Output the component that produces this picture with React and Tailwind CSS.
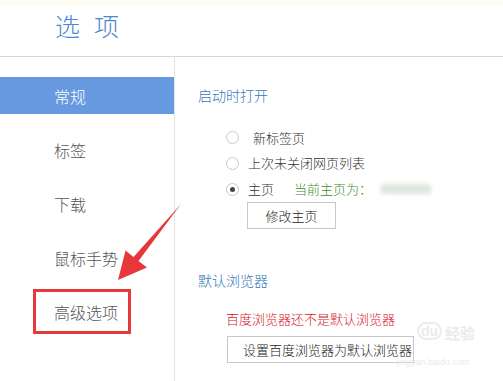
import React from 'react'

const cjk = { fontFamily: '"Microsoft YaHei", "Noto Sans CJK SC", sans-serif' }

const navItems = ['常规', '标签', '下载', '鼠标手势', '高级选项']

const Radio = ({ checked }) => (
  <span className="w-[13px] h-[13px] rounded-full border border-[#c9c9c9] bg-white flex items-center justify-center shrink-0">
    {checked && <span className="w-[5px] h-[5px] rounded-full bg-[#444]" />}
  </span>
)

const App = () => {
  return (
    <div className="relative w-[503px] h-[381px] bg-white overflow-hidden font-light" style={cjk}>
      {/* Header */}
      <div className="h-[6px] bg-[#fffdf2]" />
      <div className="h-[51px] border-b border-[#d6d6d6] flex items-center pl-[55px] pb-[10px] gap-[14px] text-[25px] text-[#4a88d2]">
        <span>选</span>
        <span>项</span>
      </div>

      <div className="flex h-[324px]">
        {/* Sidebar */}
        <div className="w-[175px] border-r border-[#e2e2e2] pt-[20px] flex flex-col gap-[17px]">
          {navItems.map((item, i) => (
            <div
              key={item}
              className={
                i === 0
                  ? 'h-[37px] w-[174px] bg-[#6699e0] text-white text-[16px] flex items-center pl-[54px]'
                  : 'h-[37px] text-[#555] text-[16px] flex items-center pl-[54px]'
              }
            >
              {item}
            </div>
          ))}
        </div>

        {/* Content */}
        <div className="flex-1 pl-[23px] pt-[28px]">
          <div className="text-[14px] leading-[20px] text-[#3577b8]">启动时打开</div>
          <div className="pl-[28px] pt-[20px] text-[13px] text-[#333]">
            <div className="h-[25px] flex items-center gap-[11px]">
              <Radio />
              <span className="pl-[3px]">新标签页</span>
            </div>
            <div className="h-[26px] flex items-center gap-[9px]">
              <Radio />
              <span>上次未关闭网页列表</span>
            </div>
            <div className="h-[26px] flex items-center gap-[9px]">
              <Radio checked />
              <span>主页</span>
              <span className="ml-[11px] text-[#3f8a1f]">当前主页为：</span>
              <span className="w-[50px] h-[10px] bg-[#dfe6df] blur-[2px]" />
            </div>
            <div className="pl-[21px]">
              <button className="w-[89px] h-[27px] border border-[#c8c8c8] bg-white text-[13px] text-[#222]">
                修改主页
              </button>
            </div>
          </div>

          <div className="mt-[41px] text-[14px] leading-[20px] text-[#3577b8]">默认浏览器</div>
          <div className="pl-[28px] pt-[19px]">
            <div className="text-[13px] leading-[20px] text-[#d7161c]">百度浏览器还不是默认浏览器</div>
            <button className="mt-[7px] ml-[1px] w-[187px] h-[27px] border border-[#c8c8c8] bg-white text-[13px] text-[#222] pl-[15px] text-left whitespace-nowrap overflow-hidden">
              设置百度浏览器为默认浏览器
            </button>
          </div>
        </div>
      </div>

      {/* Watermark */}
      <div className="absolute left-[417px] top-[322px] text-[#ebebeb] select-none pointer-events-none">
        <div className="flex items-end gap-[3px] leading-none">
          <span className="text-[14px] font-bold border-2 border-[#ebebeb] rounded-full px-[2px]" style={{ fontFamily: '"Liberation Sans", sans-serif' }}>du</span>
          <span className="text-[15px] font-bold">经验</span>
        </div>
        <div className="text-[9px] mt-[16px] -ml-[20px]" style={{ fontFamily: '"Liberation Sans", sans-serif' }}>jingyan.baidu.com</div>
      </div>

      {/* Annotation: red box */}
      <div className="absolute left-[33px] top-[289px] w-[98px] h-[45px] border-[3px] border-[#e6393b]" />

      {/* Annotation: arrow */}
      <svg className="absolute left-0 top-0" width="503" height="381" viewBox="0 0 503 381">
        <polygon
          points="181,204 138.5,261 147,267.5 118,280 125.5,250.5 133.5,257"
          fill="#e8373a"
        />
      </svg>
    </div>
  )
}

export default App
